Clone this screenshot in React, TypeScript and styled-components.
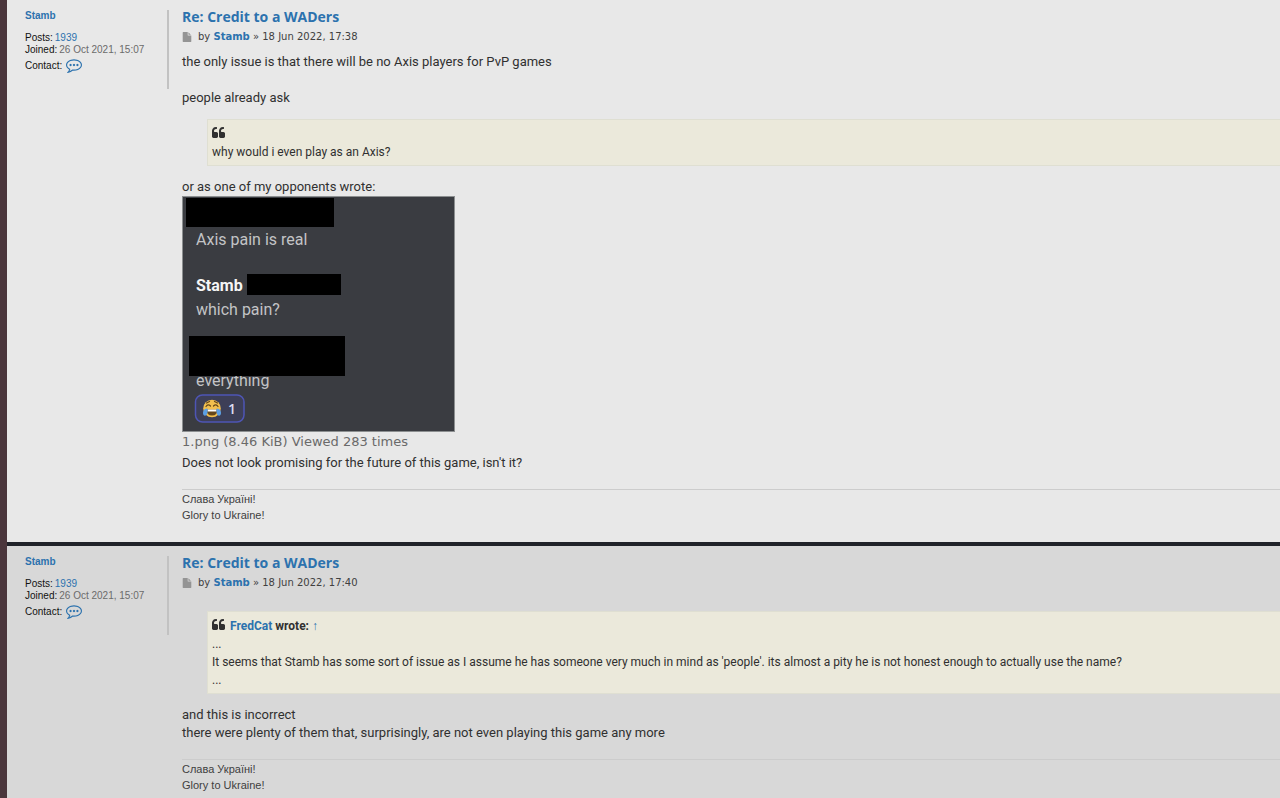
import React from "react";
import styled, { createGlobalStyle } from "styled-components";

const heading = `"Open Sans", sans-serif`;
const text = `Roboto, "Open Sans", sans-serif`;
const wide = `"DejaVu Sans", sans-serif`;
const plain = `"Liberation Sans", Arial, sans-serif`;
const link = "#2c72ae";

const GlobalStyle = createGlobalStyle`
  *, *::before, *::after { box-sizing: border-box; }
  body { margin: 0; background: #e8e8e8; }
`;

const Page = styled.main`
  height: 100vh;
  overflow: hidden;
  border-left: 7px solid #4b363c;
`;

const Post = styled.article<{ $tone: string }>`
  display: flex;
  align-items: flex-start;
  padding: 8px 0 19px 18px;
  background: ${(p) => p.$tone};
  & + & {
    border-top: 4px solid #202329;
  }
`;

const Profile = styled.aside`
  flex: none;
  width: 144px;
  height: 79px;
  margin-top: 2px;
  border-right: 2px solid #c2c2c2;
  font: 10px/12px ${plain};
  color: #111;
`;

const ProfileName = styled.div`
  font-weight: 700;
  margin-bottom: 10px;
`;

const Details = styled.dl`
  margin: 0;
`;

const Detail = styled.div<{ $tall?: boolean }>`
  display: flex;
  align-items: center;
  gap: 2px;
  height: ${(p) => (p.$tall ? 20 : 12)}px;
  dd {
    margin: 0;
    color: #6b6b6b;
  }
`;

const Link = styled.a`
  color: ${link};
  text-decoration: none;
`;

const IconLink = styled(Link)`
  display: block;
  height: 18px;
  margin-left: 2px;
`;

const Arrow = styled(Link)`
  font-family: ${plain};
  font-weight: 400;
`;

const Icon = styled.svg`
  display: block;
  flex: none;
  fill: currentColor;
`;

const Body = styled.div`
  flex: 1;
  min-width: 0;
  margin-left: 13px;
`;

const Title = styled.h3`
  margin: 0;
  font: 700 14px/18px ${heading};
`;

const Meta = styled.p`
  display: flex;
  align-items: center;
  gap: 6px;
  margin: 3px 0 8px;
  font: 10px/16px ${wide};
  color: #404040;
  svg {
    color: #949494;
  }
`;

const Content = styled.div`
  display: flow-root;
  font: 13px/18px ${text};
  color: #303030;
`;

const Text = styled.p`
  margin: 0;
  white-space: pre-line;
`;

const Quote = styled.blockquote`
  margin: 12px 0 12px 25px;
  padding: 4px;
  border: 1px solid #dfdfd2;
  border-right: 0;
  background: #ebe9db;
  font-size: 12px;
`;

const Cite = styled.cite`
  display: flex;
  align-items: center;
  gap: 4px;
  height: 19px;
  font-style: normal;
  font-weight: 700;
`;

const Attachment = styled.figure`
  margin: 0;
  svg {
    display: block;
  }
  figcaption {
    padding-bottom: 2px;
    font: 13px/20px ${wide};
    color: #6a6a6a;
  }
`;

const Signature = styled.footer`
  margin-top: 17px;
  padding-top: 1px;
  border-top: 1px solid #cccccc;
  font: 11px/16px ${plain};
  color: #404040;
  white-space: pre-line;
`;

const QuoteIcon = () => (
  <Icon width="14" height="14" viewBox="64 128 1792 1792" aria-hidden="true">
    <path d="M832 960v384q0 80-56 136t-136 56h-384q-80 0-136-56t-56-136v-704q0-104 40.5-198.5t109.5-163.5 163.5-109.5 198.5-40.5h64q26 0 45 19t19 45v128q0 26-19 45t-45 19h-64q-106 0-181 75t-75 181v32q0 40 28 68t68 28h224q80 0 136 56t56 136zm896 0v384q0 80-56 136t-136 56h-384q-80 0-136-56t-56-136v-704q0-104 40.5-198.5t109.5-163.5 163.5-109.5 198.5-40.5h64q26 0 45 19t19 45v128q0 26-19 45t-45 19h-64q-106 0-181 75t-75 181v32q0 40 28 68t68 28h224q80 0 136 56t56 136z" />
  </Icon>
);

const FileIcon = () => (
  <Icon width="10" height="10" viewBox="0 0 1792 1792" aria-hidden="true">
    <path d="M1152 512v-472q22 14 36 28l408 408q14 14 28 36h-472zm-128 32q0 40 28 68t68 28h544v1056q0 40-28 68t-68 28h-1344q-40 0-68-28t-28-68v-1600q0-40 28-68t68-28h800v544z" />
  </Icon>
);

const CommentIcon = () => (
  <Icon width="16" height="16" viewBox="0 0 1792 1792" aria-hidden="true">
    <path d="M640 896q0 53-37.5 90.5t-90.5 37.5-90.5-37.5-37.5-90.5 37.5-90.5 90.5-37.5 90.5 37.5 37.5 90.5zm384 0q0 53-37.5 90.5t-90.5 37.5-90.5-37.5-37.5-90.5 37.5-90.5 90.5-37.5 90.5 37.5 37.5 90.5zm384 0q0 53-37.5 90.5t-90.5 37.5-90.5-37.5-37.5-90.5 37.5-90.5 90.5-37.5 90.5 37.5 37.5 90.5zm-512-512q-204 0-381.5 69.5t-282 187.5-104.5 255q0 112 71.5 213.5t201.5 175.5l87 50-27 96q-24 91-70 172 152-63 275-171l43-38 57 6q69 8 130 8 204 0 381.5-69.5t282-187.5 104.5-255-104.5-255-282-187.5-381.5-69.5zm896 512q0 174-120 321.5t-326 233-450 85.5q-70 0-145-8-198 175-460 242-49 14-114 22h-5q-15 0-27-10.5t-16-27.5v-1q-3-4-.5-12t2-10 4.5-9.5l6-9 7-8.5 8-9q7-8 31-34.5t34.5-38 31-39.5 32.5-51 27-59 26-76q-157-89-247.5-220t-90.5-281q0-130 71-248.5t191-204.5 286-136.5 348-50.5 348 50.5 286 136.5 191 204.5 71 248.5z" />
  </Icon>
);

/* The attached chat picture, with its redaction bars */
const ChatPicture = () => (
  <svg width="273" height="236" viewBox="0 0 273 236" role="img" aria-label="Chat about Axis pain">
    <rect width="273" height="236" fill="#8c8f90" />
    <rect x="1" y="1" width="271" height="234" fill="#3a3c41" />
    <g fontFamily={text} fontSize="16" fill="#c3c4c6">
      <text x="14" y="49">Axis pain is real</text>
      <text x="14" y="95" fontWeight="700" fill="#f5f5f5">Stamb</text>
      <text x="14" y="119">which pain?</text>
      <text x="14" y="190">everything</text>
    </g>
    <rect x="4" y="2" width="148" height="29" />
    <rect x="65" y="78" width="94" height="21" />
    <rect x="7" y="140" width="156" height="40" />
    <rect x="13.5" y="199" width="48.5" height="27" rx="7" fill="#3d3f57" stroke="#4e55b5" strokeWidth="1.5" />
    <circle cx="30" cy="212.500" r="8.800" fill="#f3c04e" />
    <path d="M24 210.500q2-3 4.500-.5M31.500 210q2.500-2.500 4.500.5M24.500 207l3-1.500M35.500 207l-3-1.500" stroke="#65471b" strokeWidth="1.200" fill="none" strokeLinecap="round" />
    <path d="M24.500 213.500h11q0 6-5.500 6t-5.500-6z" fill="#65471b" />
    <path d="M25.500 213.500h9v2h-9z" fill="#fff" />
    <path d="M25.500 212.500q-4 0-4.500 4-.2 3 2 3.200 3 0 2.500-7.200zM34.500 212.500q4 0 4.500 4 .2 3-2 3.200-3 0-2.500-7.200z" fill="#5c9fe4" />
    <text x="46" y="218" fontFamily={heading} fontSize="14" fontWeight="600" fill="#dcdcf0">1</text>
  </svg>
);

type PostProps = { tone: string; time: string; children: React.ReactNode };

const ForumPost = ({ tone, time, children }: PostProps) => (
  <Post $tone={tone}>
    <Profile>
      <ProfileName><Link href="#stamb">Stamb</Link></ProfileName>
      <Details>
        <Detail><dt>Posts:</dt><dd><Link href="#posts">1939</Link></dd></Detail>
        <Detail><dt>Joined:</dt><dd>26 Oct 2021, 15:07</dd></Detail>
        <Detail $tall>
          <dt>Contact:</dt>
          <dd><IconLink href="#contact" aria-label="Contact Stamb"><CommentIcon /></IconLink></dd>
        </Detail>
      </Details>
    </Profile>
    <Body>
      <Title><Link href="#post">Re: Credit to a WADers</Link></Title>
      <Meta>
        <FileIcon />
        <span>by <Link href="#stamb"><strong>Stamb</strong></Link> » <time>{time}</time></span>
      </Meta>
      <Content>{children}</Content>
      <Signature>{"Слава Україні!\nGlory to Ukraine!"}</Signature>
    </Body>
  </Post>
);

export default function App() {
  return (
    <>
      <GlobalStyle />
      <Page>
        <ForumPost tone="#e8e8e8" time="18 Jun 2022, 17:38">
          <Text>{"the only issue is that there will be no Axis players for PvP games\n\npeople already ask"}</Text>
          <Quote>
            <Cite><QuoteIcon /></Cite>
            <Text>why would i even play as an Axis?</Text>
          </Quote>
          <Text>or as one of my opponents wrote:</Text>
          <Attachment>
            <ChatPicture />
            <figcaption>1.png (8.46 KiB) Viewed 283 times</figcaption>
          </Attachment>
          <Text>Does not look promising for the future of this game, isn't it?</Text>
        </ForumPost>
        <ForumPost tone="#d8d8d8" time="18 Jun 2022, 17:40">
          <Quote>
            <Cite>
              <QuoteIcon />
              <span><Link href="#fredcat">FredCat</Link> wrote: <Arrow href="#quoted">↑</Arrow></span>
            </Cite>
            <Text>{"...\nIt seems that Stamb has some sort of issue as I assume he has someone very much in mind as 'people'. its almost a pity he is not honest enough to actually use the name?\n..."}</Text>
          </Quote>
          <Text>{"and this is incorrect\nthere were plenty of them that, surprisingly, are not even playing this game any more"}</Text>
        </ForumPost>
      </Page>
    </>
  );
}
